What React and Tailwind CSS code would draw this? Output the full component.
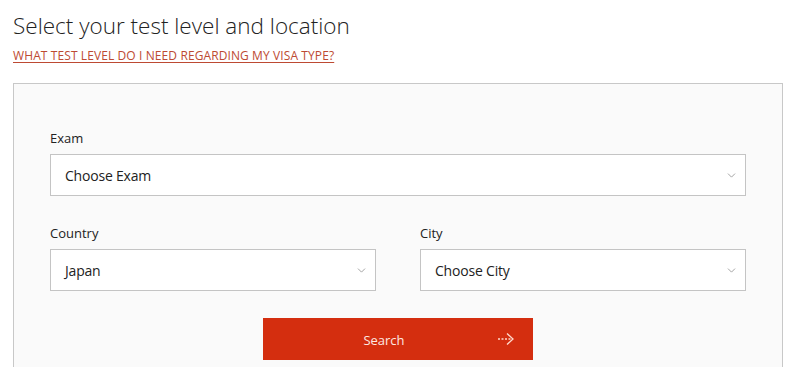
import { ChevronDown } from 'lucide-react';

function SelectBox({ value, className }) {
  return (
    <div
      className={
        'flex h-[42px] items-center justify-between border border-[#c4c4c4] bg-white pl-[14px] pr-[7px] ' +
        (className || '')
      }
    >
      <span className="text-[14px] tracking-[-0.2px] text-[#222]">{value}</span>
      <ChevronDown className="h-[13px] w-[13px] text-[#8f8f8f]" strokeWidth={1.5} />
    </div>
  );
}

export default function App() {
  return (
    <div
      className="min-h-[367px] w-[795px] overflow-hidden bg-white pl-[13px] pr-[12px] pt-[10px]"
      style={{ fontFamily: '"Open Sans", "Noto Sans", sans-serif' }}
    >
      <h1 className="text-[22.5px] font-light leading-[32px] text-[#222]">
        Select your test level and location
      </h1>
      <a
        href="#"
        className="mt-[6px] block text-[12px] uppercase leading-[16px] tracking-[0.1px] text-[#bd4a33] underline decoration-[#bd4a33] underline-offset-2"
      >
        What test level do I need regarding my visa type?
      </a>

      <div className="mt-[19px] border border-[#c8c8c8] bg-[#fafafa] px-[36px] pb-[10px] pt-[45px]">
        <div className="text-[13px] leading-[18px] text-[#222]">Exam</div>
        <SelectBox value="Choose Exam" className="mt-[7px]" />

        <div className="mt-[28px] grid grid-cols-2 gap-x-[44px]">
          <div>
            <div className="text-[13px] leading-[18px] text-[#222]">Country</div>
            <SelectBox value="Japan" className="mt-[7px]" />
          </div>
          <div>
            <div className="text-[13px] leading-[18px] text-[#222]">City</div>
            <SelectBox value="Choose City" className="mt-[7px]" />
          </div>
        </div>

        <div className="mt-[27px] flex justify-center">
          <button className="relative flex h-[42px] w-[270px] items-center justify-center bg-[#d42e0f] pr-[28px] pt-[3px] text-[13px] text-[#fde8e2]">
            Search
            <svg
              className="absolute right-[18px] top-1/2 -translate-y-1/2"
              width="18"
              height="14"
              viewBox="0 0 18 14"
              fill="none"
              stroke="#ffd9cc"
              strokeWidth="1.3"
            >
              <path d="M1 7h14" strokeDasharray="2 1.5" />
              <path d="M10 1.5 L16 7 L10 12.5" />
            </svg>
          </button>
        </div>
      </div>
    </div>
  );
}
